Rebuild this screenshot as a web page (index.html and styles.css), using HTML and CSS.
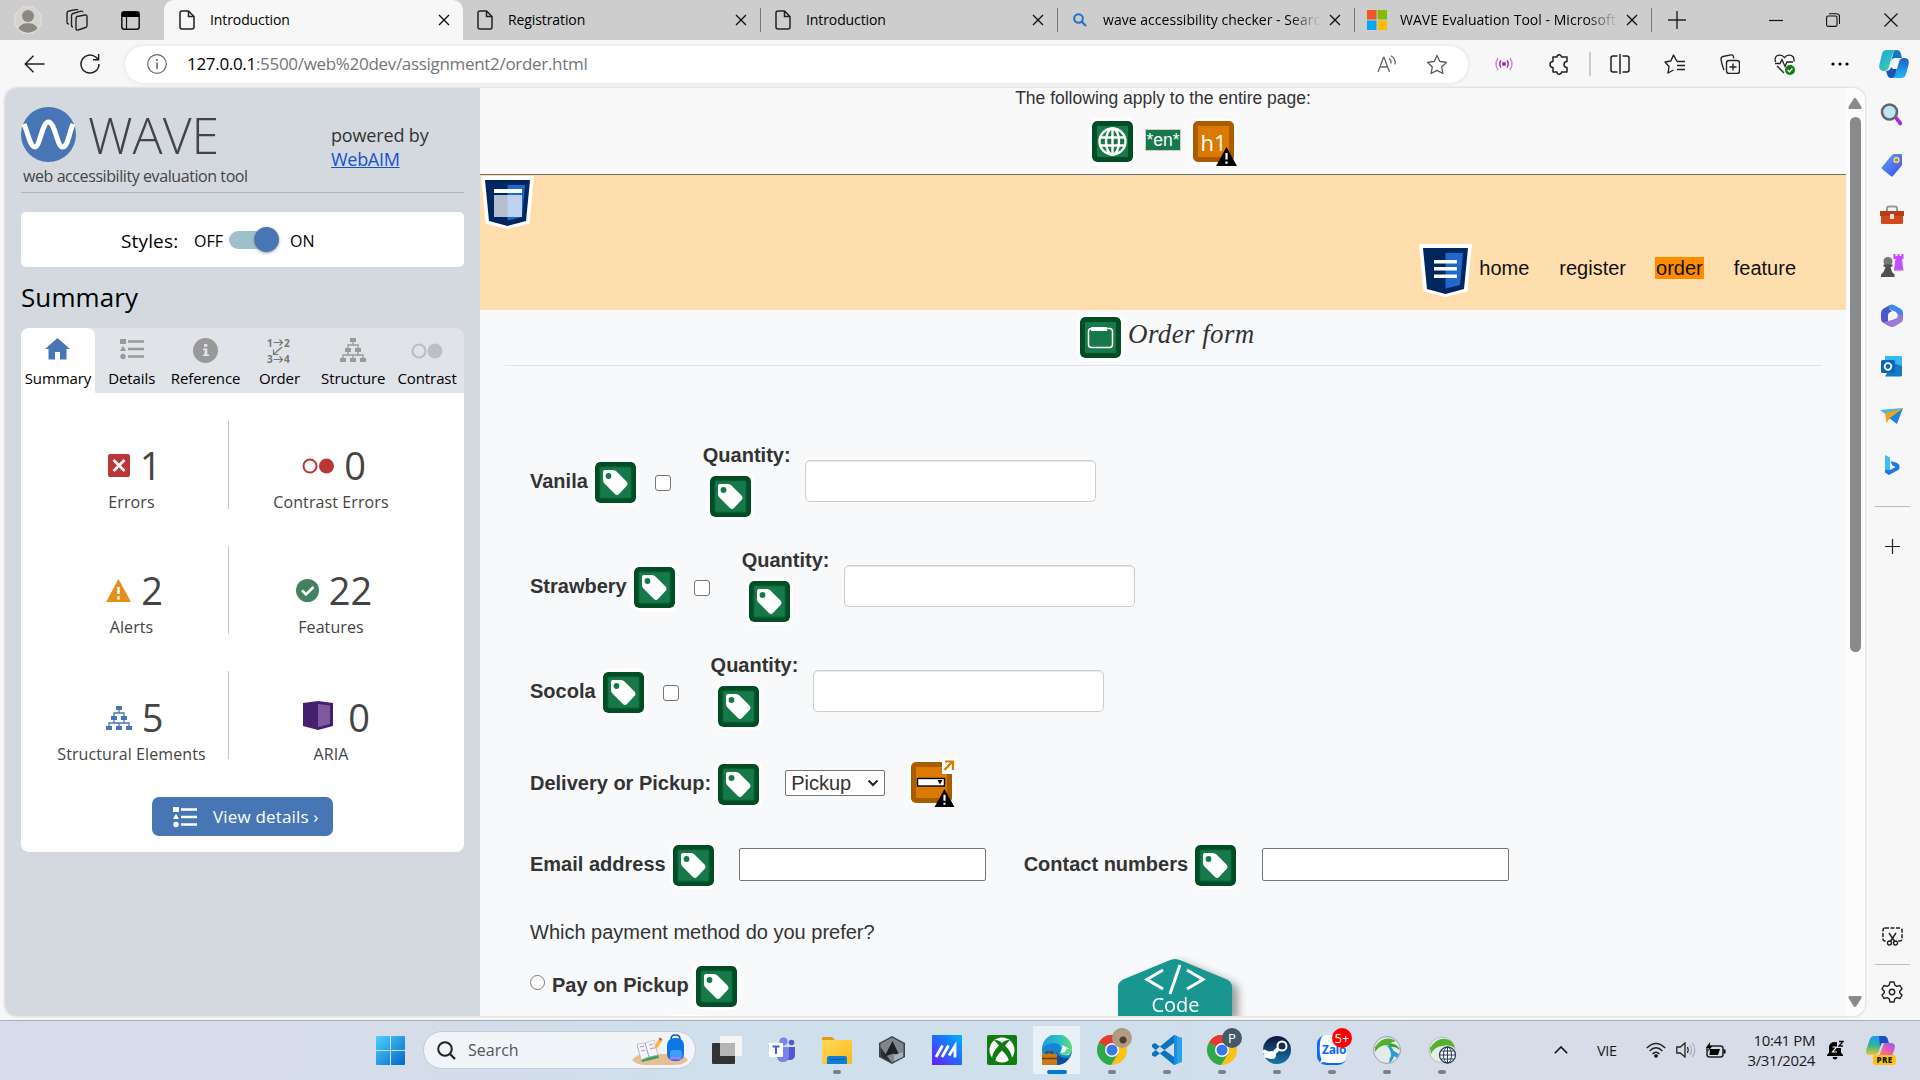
FILE: index.html
```html
<!DOCTYPE html>
<html lang="en">
<head>
<meta charset="utf-8">
<title>Introduction</title>
<link rel="stylesheet" href="styles.css">
</head>
<body>
<svg class="defs" aria-hidden="true">
  <defs>
    <linearGradient id="gWin" x1="0" y1="0" x2="1" y2="1"><stop offset="0" stop-color="#4fd0ff"/><stop offset="1" stop-color="#0067c8"/></linearGradient>
    <linearGradient id="gCop" x1="0" y1="0" x2="1" y2="1"><stop offset="0" stop-color="#12a5e8"/><stop offset="1" stop-color="#52d68f"/></linearGradient>
    <linearGradient id="gCop2" x1="0" y1="0" x2="0" y2="1"><stop offset="0" stop-color="#1e5fc9"/><stop offset="1" stop-color="#22b8f5"/></linearGradient>
    <linearGradient id="gBlue" x1="0" y1="0" x2="1" y2="1"><stop offset="0" stop-color="#63a4ff"/><stop offset="1" stop-color="#3a4fe0"/></linearGradient>
    <linearGradient id="gEdge" x1="0" y1="0" x2="1" y2="0"><stop offset="0" stop-color="#1b9de2"/><stop offset=".6" stop-color="#2fc3c0"/><stop offset="1" stop-color="#5fe070"/></linearGradient>
    <linearGradient id="gA" x1="0" y1="1" x2="1" y2="0"><stop offset="0" stop-color="#6a1bff"/><stop offset=".55" stop-color="#1f6dff"/><stop offset="1" stop-color="#00b4ff"/></linearGradient>
    <linearGradient id="gSteam" x1="0" y1="0" x2="0" y2="1"><stop offset="0" stop-color="#10143a"/><stop offset="1" stop-color="#1277b0"/></linearGradient>
    <linearGradient id="gPre" x1="0" y1="0" x2="0" y2="1"><stop offset="0" stop-color="#1c9cf0"/><stop offset=".5" stop-color="#2fb59a"/><stop offset="1" stop-color="#f3c623"/></linearGradient>
    <linearGradient id="gPre2" x1="1" y1="0" x2="0" y2="1"><stop offset="0" stop-color="#8f5cf5"/><stop offset=".5" stop-color="#e85cb0"/><stop offset="1" stop-color="#ff8a5c"/></linearGradient>
    <linearGradient id="gFold" x1="0" y1="0" x2="1" y2="1"><stop offset="0" stop-color="#ffd95c"/><stop offset="1" stop-color="#fbb81c"/></linearGradient>
    <symbol id="doc" viewBox="0 0 16 20"><path d="M3 1h6.500L15 6.500V17a2 2 0 0 1-2 2H3a2 2 0 0 1-2-2V3a2 2 0 0 1 2-2zM9.500 1v5.500H15" fill="none" stroke="#222" stroke-width="1.500"/></symbol>
    <symbol id="x" viewBox="0 0 12 12"><path d="M1 1l10 10M11 1L1 11" stroke="#111" stroke-width="1.400"/></symbol>
    <symbol id="tag" viewBox="0 0 41 41"><rect width="41" height="41" rx="5" fill="#004d26"/><rect x="5" y="5" width="31" height="31" rx="1" fill="#17794a" stroke="#0d6a3b"/><path d="M8 10q0-2 2-2h8q2 0 3.500 1.500l10 10q2 2.500 0 4.500l-7.500 8q-2 2-4 0L9.500 21.500Q8 20 8 18z" fill="#fff"/><ellipse cx="13.500" cy="14" rx="2.900" ry="3" fill="#17794a"/></symbol>
    <symbol id="warn" viewBox="0 0 21 19"><path d="M10.500 0L21 19H0z" fill="#000"/><path d="M10.500 6v6.500M10.500 14.500v2.200" stroke="#fff" stroke-width="2.200"/></symbol>
    <symbol id="list" viewBox="0 0 24 22"><path d="M0 1h6v5H0zM3 7.800l3 5.200H0z"/><circle cx="3" cy="18.500" r="2.700"/><path d="M8 2.200h16v2.600H8zM8 9.700h16v2.600H8zM8 17.200h16v2.600H8z"/></symbol>
    <symbol id="tree" viewBox="0 0 26 24"><path d="M10 0h6v4h-6zM5 10h6v4H5zM15 10h6v4h-6zM0 20h6v4H0zM10 20h6v4h-6zM20 20h6v4h-6z"/><path d="M13 3v4M8 10V7h10v3M8 13v4M18 13v4M3 20v-3h20v3M13 20v-3" fill="none" stroke="currentColor" stroke-width="1.300"/></symbol>
    <symbol id="chrome" viewBox="0 0 30 30"><circle cx="15" cy="15" r="15" fill="#fbc116"/><path d="M15 15L2 7.500A15 15 0 0 1 28 7.500z" fill="#e33b2e"/><path d="M2 7.500A15 15 0 0 0 14 30l7.500-12L15 15z" fill="#2da94f"/><path d="M2 7.500A15 15 0 0 1 28 7.500H15z" fill="#e33b2e"/><circle cx="15" cy="15" r="7" fill="#fff"/><circle cx="15" cy="15" r="5.500" fill="#3b78e7"/></symbol>
    <symbol id="shield" viewBox="0 0 53 53"><path d="M0 0h53l-4.500 47.500L26.500 53 4.500 47.500z" fill="#fff"/><path d="M4 4h45l-4 41-18.500 5L8 45z" fill="#00265e"/><path d="M26.500 9H44l-3 32-14.500 3.500z" fill="#1f68cc"/></symbol>
  </defs>
</svg>

<header class="titlebar">
  <div class="tb-left">
    <svg class="avatar" viewBox="0 0 28 28"><circle cx="14" cy="14" r="13.500" fill="#d6d4cf" stroke="#e4e2dd"/><circle cx="14" cy="10" r="6" fill="#8c8880"/><path d="M4.500 22.500a10 7.500 0 0 1 19 0A13 13 0 0 1 4.500 22.500z" fill="#8c8880"/></svg>
    <svg class="workspaces" viewBox="0 0 22 22"><g fill="none" stroke="#222" stroke-width="1.400"><path d="M11 7.500l8-1.500q2-.3 2 1.500v9q0 1.500-1.300 2L12 21q-2 .5-2-1.500V9.500q0-1.600 1-2z"/><path d="M7 18q-1.500 0-1.500-2V6.500Q5.500 5 7 4.500l8-2.300q1.500-.4 2 1M3 15q-2 0-2-2V4Q1 2.500 3 2l7-1.400q1.500-.2 2 .6"/></g></svg>
    <svg class="tabact" viewBox="0 0 19 19"><rect x=".8" y=".8" width="17.400" height="17.400" rx="2.500" fill="none" stroke="#111" stroke-width="1.500"/><path d="M1 3q0-2 2-2h13q2 0 2 2v3H1z"/><path d="M5.500 6v12" stroke="#111" stroke-width="1.200"/></svg>
  </div>
  <div class="tab active"><span class="fav"><svg width="16" height="20"><use href="#doc"/></svg></span><span class="ttl">Introduction</span><svg class="close"><use href="#x"/></svg></div>
  <div class="tab"><span class="fav"><svg width="16" height="20"><use href="#doc"/></svg></span><span class="ttl">Registration</span><svg class="close"><use href="#x"/></svg></div>
  <div class="tab"><span class="fav"><svg width="16" height="20"><use href="#doc"/></svg></span><span class="ttl">Introduction</span><svg class="close"><use href="#x"/></svg></div>
  <div class="tab"><span class="fav"><svg width="14" height="14" viewBox="0 0 14 14"><g fill="none" stroke="#1a73c8" stroke-width="2"><circle cx="5.500" cy="5.500" r="4.300"/><path d="M8.500 8.500l4.500 4.500"/></g></svg></span><span class="ttl fade">wave accessibility checker - Search</span><svg class="close"><use href="#x"/></svg></div>
  <div class="tab"><span class="fav"><svg width="20" height="20" viewBox="0 0 20 20"><path d="M0 0h9.500v9.500H0z" fill="#f35325"/><path d="M10.500 0H20v9.500h-9.500z" fill="#81bc06"/><path d="M0 10.500h9.500V20H0z" fill="#05a6f0"/><path d="M10.500 10.500H20V20h-9.500z" fill="#ffba08"/></svg></span><span class="ttl fade">WAVE Evaluation Tool - Microsoft</span><svg class="close"><use href="#x"/></svg></div>
  <div class="newtab"><svg width="18" height="18" viewBox="0 0 18 18"><path d="M9 0v18M0 9h18" stroke="#222" stroke-width="1.400"/></svg></div>
  <div class="winctl">
    <svg width="14" height="14" viewBox="0 0 14 14"><path d="M0 7.500h14" stroke="#111" stroke-width="1.200"/></svg>
    <svg width="14" height="14" viewBox="0 0 14 14"><g fill="none" stroke="#111" stroke-width="1.100"><rect x=".6" y="3" width="10.400" height="10.400" rx="1.500"/><path d="M3 .8h7.500q3 0 3 3V11"/></g></svg>
    <svg width="14" height="14" viewBox="0 0 14 14"><path d="M.5.5l13 13M13.500.5L.5 13.500" stroke="#111" stroke-width="1.200"/></svg>
  </div>
</header>

<div class="toolbar">
  <div class="cell"><svg width="21" height="18" viewBox="0 0 21 18"><path d="M20.500 9H1.500M9.500 .8L1.300 9l8.200 8.200" fill="none" stroke="#222" stroke-width="1.500"/></svg></div>
  <div class="cell"><svg width="20" height="20" viewBox="0 0 20 20"><path d="M19 10a9 9 0 1 1-3-6.700L18.500 5.500M18.600 0v5.700H13" fill="none" stroke="#222" stroke-width="1.500"/></svg></div>
  <div class="omnibox">
    <svg width="20" height="20" viewBox="0 0 20 20"><circle cx="10" cy="10" r="9.300" fill="none" stroke="#666" stroke-width="1.200"/><path d="M10 8.500v6.500M10 5v2" stroke="#555" stroke-width="1.400"/></svg>
    <span class="url"><b>127.0.0.1</b>:5500/web%20dev/assignment2/order.html</span>
    <svg class="read" width="20" height="18" viewBox="0 0 20 18"><path d="M1 17L6.500 2.500h.6L12.500 17M3 12h7.500M12 3.500q2.500 2 2 5M14 .8q5 3 4 8.500" fill="none" stroke="#666" stroke-width="1.300"/></svg>
    <svg class="star" width="22" height="21" viewBox="0 0 22 21"><path d="M11 1.500l2.900 6 6.600.9-4.800 4.600 1.200 6.500L11 16.400l-5.900 3.100L6.300 13 1.500 8.400l6.600-.9z" fill="none" stroke="#555" stroke-width="1.300" stroke-linejoin="round"/></svg>
  </div>
  <div class="cell"><svg width="18" height="14" viewBox="0 0 18 14"><circle cx="9" cy="7" r="2" fill="#9b25b8"/><path d="M6 3.500q-2.500 3.500 0 7M12 3.500q2.500 3.500 0 7" fill="none" stroke="#9b25b8" stroke-width="1.400"/><path d="M3 1Q-1 7 3 13M15 1q4 6 0 12" fill="none" stroke="#d28be0" stroke-width="1.500"/></svg></div>
  <div class="cell"><svg width="20" height="21" viewBox="0 0 20 21"><path d="M4 3h4a2.200 2.200 0 0 1 4.500 0H18v4.500a3 3 0 0 0 0 6V18h-5.500a2.200 2.200 0 0 1-4.500 0H4v-4.500a3 3 0 0 1 0-6z" fill="none" stroke="#222" stroke-width="1.500" stroke-linejoin="round"/></svg></div>
  <i class="sep"></i>
  <div class="cell"><svg width="20" height="20" viewBox="0 0 20 20"><path d="M7.500 2H3Q1 2 1 4v12q0 2 2 2h4.500M12.500 2H17q2 0 2 2v12q0 2-2 2h-4.500M10 0v20" fill="none" stroke="#222" stroke-width="1.500"/></svg></div>
  <div class="cell"><svg width="21" height="20" viewBox="0 0 21 20"><path d="M13 7.500L9.500 1 6.800 7 1 8l4 4.500L4 19l5.500-3M13 7.500h8M13 11.500h8M13 15.500h8" fill="none" stroke="#222" stroke-width="1.400" stroke-linejoin="round"/></svg></div>
  <div class="cell"><svg width="20" height="20" viewBox="0 0 20 20"><g fill="none" stroke="#222" stroke-width="1.400"><rect x="6.500" y="6.500" width="13" height="13" rx="2.500"/><path d="M13 9.500v7M9.500 13h7M4 16Q1.500 10 1 5q-.2-2 2-2.500L11 .9q2-.3 2.400 1.500l.4 2"/></g></svg></div>
  <div class="cell"><svg width="21" height="21" viewBox="0 0 21 21"><path d="M1.500 8Q0 2 5 1.200q3.500-.4 5.500 2.500Q12.500.8 16 1.200q4.500.7 4 6.300M3 12l7 7M1 9.500h5l2-4 3 7 2-4.500h6" fill="none" stroke="#222" stroke-width="1.300"/><circle cx="16" cy="16" r="5" fill="#0f7b10"/><path d="M13.600 16l1.800 1.800 3-3.300" fill="none" stroke="#fff" stroke-width="1.300"/></svg></div>
  <div class="cell"><svg width="18" height="4" viewBox="0 0 18 4"><circle cx="2" cy="2" r="1.600"/><circle cx="9" cy="2" r="1.600"/><circle cx="16" cy="2" r="1.600"/></svg></div>
  <div class="cell"><svg width="30" height="28" viewBox="0 0 30 28"><path d="M8 0h10q-4 1-5 6l-3 11q-1 4-5 4Q-1 21 .5 14L3 4q1-4 5-4z" fill="url(#gCop)"/><path d="M18 0q3 0 4 4l1 4h-7q-3 0-4 4l-1 4 3-12q1-4 4-4z" fill="#1478c8"/><path d="M22 28H12q4-1 5-6l3-10q1-4 5-4 6 0 4.500 7L27 24q-1 4-5 4z" fill="url(#gCop2)"/><path d="M12 28q-3 0-4-4l-1-3q4 0 5-4l2 2h4l-1 3q-1 6-5 6z" fill="#1653b8"/></svg></div>
</div>

<div class="body">
  <div class="frame">
    <aside class="wave">
      <div class="wave-head">
        <div>
          <div class="logo"><svg width="55" height="55" viewBox="0 0 55 55"><circle cx="27.500" cy="27.500" r="27.500" fill="#4876b5"/><path d="M3 17C7 26 9 40 14 40S21 15 27.500 15 36 40 41.500 40 48 26 52 17" fill="none" stroke="#fff" stroke-width="5"/></svg><span>WAVE</span></div>
          <p class="tagline">web accessibility evaluation tool</p>
        </div>
        <div class="powered">powered by<br><a>WebAIM</a></div>
      </div>
      <div class="styles-box"><span class="st-l">Styles:</span><span class="st-off">OFF</span><span class="toggle"><i></i></span><span>ON</span></div>
      <h2>Summary</h2>
      <nav class="wtabs">
        <div class="on"><svg width="25" height="22" viewBox="0 0 25 22"><path d="M12.500 0L25 11h-3.500v10.500H15V14h-5v7.500H3.500V11H0z" fill="#4876b5"/></svg><span>Summary</span></div>
        <div><svg width="24" height="22"><use href="#list"/></svg><span>Details</span></div>
        <div><svg width="25" height="25" viewBox="0 0 25 25"><circle cx="12.500" cy="12.500" r="12.500"/><path d="M11 6h3.300v2.800H11zM10 10.500h4.300v6H16V18h-6v-1.500h1.500v-4.400H10z" fill="#e0e3e8"/></svg><span>Reference</span></div>
        <div><svg class="ord" width="26" height="26" viewBox="0 0 26 26"><text x="1" y="8.500">1</text><text x="18" y="8.500">2</text><text x="1" y="25">3</text><text x="18" y="25">4</text><path d="M7.500 4.500h9M13.500 1.500l3 3-3 3M7.500 21.500h9M13.500 18.500l3 3-3 3M16 9l-8 7M7.500 11.500V16.500h5" fill="none" stroke="#777" stroke-width="1.200"/></svg><span>Order</span></div>
        <div><svg width="26" height="24"><use href="#tree"/></svg><span>Structure</span></div>
        <div><svg width="32" height="16" viewBox="0 0 32 16"><circle cx="8" cy="8" r="6.500" fill="none" stroke="#bcc0c5" stroke-width="2.200"/><circle cx="24" cy="8" r="7.500" fill="#bcc0c5"/></svg><span>Contrast</span></div>
      </nav>
      <section class="panel">
        <div class="stats">
          <div class="stat"><p><svg width="22" height="23" viewBox="0 0 22 23"><rect width="22" height="23" rx="2" fill="#bb3636"/><path d="M5.500 6l11 11M16.500 6l-11 11" stroke="#fff" stroke-width="2.600"/></svg>1</p>Errors</div>
          <div class="stat"><p><svg width="32" height="16" viewBox="0 0 32 16"><circle cx="8" cy="8" r="6.500" fill="none" stroke="#bb3636" stroke-width="2"/><circle cx="24.500" cy="8" r="7.500" fill="#bb3636"/></svg>0</p>Contrast Errors</div>
          <div class="stat"><p><svg width="25" height="23" viewBox="0 0 25 23"><path d="M12.500 0L25 23H0z" fill="#e38f1a"/><path d="M12.500 8v7M12.500 17.500v3" stroke="#fff" stroke-width="2.600"/></svg>2</p>Alerts</div>
          <div class="stat"><p><svg width="23" height="23" viewBox="0 0 23 23"><circle cx="11.500" cy="11.500" r="11.500" fill="#438261"/><path d="M6 11.500l4 4 7.500-7.500" fill="none" stroke="#fff" stroke-width="2.500"/></svg>22</p>Features</div>
          <div class="stat last"><p><svg class="bt" width="26" height="24"><use href="#tree"/></svg>5</p>Structural Elements</div>
          <div class="stat last aria"><p><svg width="30" height="29" viewBox="0 0 30 29"><path d="M15 0l15 2v23l-15 4-15-4V2z" fill="#46216b"/><path d="M15 3l12 1.500v18.500L15 26z" fill="#7d5a9e"/></svg>0</p>ARIA</div>
        </div>
        <a class="btn"><svg width="24" height="22"><use href="#list"/></svg>View details ›</a>
      </section>
    </aside>

    <main class="page">
      <div class="pagewide">
        <p>The following apply to the entire page:</p>
        <div class="icons">
          <svg class="wi" viewBox="0 0 41 41"><rect width="41" height="41" rx="5" fill="#004d26"/><rect x="5" y="5" width="31" height="31" rx="1" fill="#17794a"/><g fill="none" stroke="#fff" stroke-width="2.400"><circle cx="20.500" cy="20.500" r="13"/><ellipse cx="20.500" cy="20.500" rx="6.500" ry="13"/><path d="M20.500 7v27M8.500 16.500h24M8.500 24.500h24"/></g></svg>
          <span class="lang">*en*</span>
          <span class="h1ic wi">h1<svg><use href="#warn"/></svg></span>
        </div>
      </div>
      <div class="band">
        <svg class="sh1"><use href="#shield"/><path d="M13 13h28v4H13z" fill="#fff"/><path d="M13 19h28v22H13z" fill="#fff" opacity=".7"/></svg>
        <nav>
          <svg class="sh2"><use href="#shield"/><path d="M15 16h23v3.500H15zM15 23h23v3.500H15zM15 30.500h23V34H15z" fill="#fff"/></svg>
          <a>home</a><a>register</a><a class="cur">order</a><a>feature</a>
        </nav>
      </div>
      <div class="heading"><svg class="wi" viewBox="0 0 41 41"><rect width="41" height="41" rx="5" fill="#004d26"/><rect x="5" y="5" width="31" height="31" rx="1" fill="#17794a"/><rect x="8.500" y="11.500" width="24" height="19" rx="3" fill="none" stroke="#fff" stroke-width="1.500"/><path d="M11 10h16v4H11z" fill="#fff"/></svg><h1>Order form</h1></div>
      <form>
        <div class="row"><b>Vanila</b><svg class="wi"><use href="#tag"/></svg><input type="checkbox"><div class="qty"><b>Quantity:</b><svg class="wi"><use href="#tag"/></svg></div><input class="fc" type="text"></div>
        <div class="row"><b>Strawbery</b><svg class="wi"><use href="#tag"/></svg><input type="checkbox"><div class="qty"><b>Quantity:</b><svg class="wi"><use href="#tag"/></svg></div><input class="fc" type="text"></div>
        <div class="row"><b>Socola</b><svg class="wi"><use href="#tag"/></svg><input type="checkbox"><div class="qty"><b>Quantity:</b><svg class="wi"><use href="#tag"/></svg></div><input class="fc" type="text"></div>
        <div class="row r-del"><b>Delivery or Pickup:</b><svg class="wi"><use href="#tag"/></svg><span class="select">Pickup<svg width="12" height="8" viewBox="0 0 12 8"><path d="M1.500 1.500L6 6l4.500-4.500" fill="none" stroke="#222" stroke-width="2"/></svg></span>
          <svg class="jump" viewBox="0 0 47 50"><rect x="1" y="2" width="46" height="46" rx="6" fill="#fff"/><rect x="3" y="4" width="41" height="41" rx="5" fill="#a95c00"/><rect x="8" y="9" width="31" height="31" fill="#da7a00"/><path d="M34 0h13v16H34z" fill="#fff"/><path d="M36.500 12l7.500-8M37 3.500h8V12" fill="none" stroke="#da7a00" stroke-width="2.200"/><rect x="9.500" y="20.500" width="27" height="7.500" fill="#fff" stroke="#000" stroke-width="1.400"/><path d="M29.500 22h5l-2.500 4.500z"/><svg x="26" y="31" width="21" height="18"><use href="#warn"/></svg></svg></div>
        <div class="row r-mail"><b>Email address</b><svg class="wi"><use href="#tag"/></svg><input class="raw" type="text"><b class="second">Contact numbers</b><svg class="wi"><use href="#tag"/></svg><input class="raw" type="text"></div>
        <p class="q">Which payment method do you prefer?</p>
        <div class="row r-pay"><input type="radio"><b>Pay on Pickup</b><svg class="wi"><use href="#tag"/></svg></div>
        <div class="row r-next"><svg class="wi"><use href="#tag"/></svg></div>
      </form>
      <div class="code"><svg width="114" height="57" viewBox="0 0 114 57"><path d="M0 57V28q0-5 5-7.500L51 1.500q6-3 12 0l46 19q5 2.500 5 7.500v29z" fill="#18968f"/><path d="M45 11L29 20.500 45 30M69 11l16 9.500L69 30M62 6L52 35" fill="none" stroke="#fff" stroke-width="3"/></svg><span>Code</span></div>
    </main>
    <div class="scroll"><svg width="14" height="11" viewBox="0 0 14 11"><path d="M7 0q1 0 1.500 1L13.500 9q.5 2-1 2H1.500Q0 11 .5 9L5.500 1Q6 0 7 0z"/></svg><i></i><svg width="14" height="11" viewBox="0 0 14 11"><path d="M7 11q1 0 1.500-1L13.500 2q.5-2-1-2H1.500Q0 0 .5 2l5 8Q6 11 7 11z"/></svg></div>
  </div>

  <aside class="edgebar">
    <svg width="24" height="24" viewBox="0 0 24 24"><path d="M14 15l3-2 5 6.500q.5 3-2.500 3z" fill="#b026e8"/><circle cx="9.500" cy="9" r="7.500" fill="#bfe3f7" stroke="#666" stroke-width="2.600"/></svg>
    <svg width="22" height="24" viewBox="0 0 22 24"><path d="M1 14L11 2q1-1 2.500-1H20q1 0 1 1v9q0 1-.6 2L12 23q-1.200 1-2.300 0L1 16q-.8-1 0-2z" fill="url(#gBlue)"/><circle cx="15.500" cy="7" r="2.400" fill="#6d8cff" stroke="#ffd43b" stroke-width="1.600"/></svg>
    <svg width="24" height="20" viewBox="0 0 24 20"><path d="M7 6V3.500Q7 1.500 9 1.500h6q2 0 2 2V6" fill="none" stroke="#999" stroke-width="2"/><rect x="1" y="6" width="22" height="13" rx="1.500" fill="#d14a1c"/><path d="M0 6h24v5H0z" fill="#b93c12"/><rect x="10" y="9" width="4" height="5" fill="#ddd"/></svg>
    <svg width="24" height="24" viewBox="0 0 24 24"><path d="M13.500 1h2v2h2V1h2v2h2V1h2v5h-1.500l1 9q.5 2 1 2.500H14l1.500-11.500H13.500z" fill="#c44dff"/><circle cx="8" cy="8.500" r="4.500" fill="#777"/><path d="M3.500 11.500h9v2l-2 .5 1.500 5 2.500 2.500V24H1v-2.500L3.500 19 5.500 14l-2-.5z" fill="#505050"/></svg>
    <svg width="22" height="23" viewBox="0 0 22 23"><path d="M8 1.500Q11 0 13 1l7 4q2 1.500 2 4v5l-5-3-2-3L8 5z" fill="#3b8ae6"/><path d="M8 1.500L2 5Q0 6.500 0 9v6q0 2 2 3.500l5 3V11l4-4-3-2z" fill="#4a58c8"/><path d="M22 12v3q0 2-2 3.500l-6 3.800q-3 1.400-6 0L2.500 18 11 16l5-2 1-4z" fill="#9c7ad8"/><circle cx="11" cy="11.500" r="3.800" fill="#f7f7f7"/></svg>
    <svg width="22" height="22" viewBox="0 0 22 22"><path d="M4 1h16q1 0 1 1v10H4z" fill="#36b9f3"/><path d="M12 8l9 3v9q0 1.500-1.500 1.500H4z" fill="#1578c6"/><rect y="5" width="14" height="13" rx="1.500" fill="#0a67b8"/><circle cx="7" cy="11.500" r="3.300" fill="none" stroke="#fff" stroke-width="1.800"/></svg>
    <svg width="24" height="18" viewBox="0 0 24 18"><path d="M0 3L23 1 8 9z" fill="#35b8f5"/><path d="M23 1L17 17 9 11z" fill="#1f84e0"/><path d="M23 1L5 6l1.500 10L10 11z" fill="#f0a020"/></svg>
    <svg width="16" height="21" viewBox="0 0 16 21"><path d="M1 0l5 2.500V15l-5 2.500z" fill="#3bc0f5"/><path d="M1 15v2.500L5 20l10-5.500q2-5-3-7L6.500 6l2 4.500 3 1.500L6 15z" fill="#1f76e8"/></svg>
    <hr>
    <svg class="plus" width="15" height="15" viewBox="0 0 15 15"><path d="M7.500 0v15M0 7.500h15" stroke="#222" stroke-width="1.200"/></svg>
    <svg class="snip" width="21" height="19" viewBox="0 0 21 19"><rect x="1" y="1" width="19" height="13" rx="2" fill="none" stroke="#222" stroke-width="1.500" stroke-dasharray="4 1.500"/><path d="M5 13h11v6H5z" fill="#f7f7f7"/><path d="M7 6l6 9M14 6l-6 9" stroke="#222" stroke-width="1.400"/><g fill="none" stroke="#222" stroke-width="1.300"><circle cx="7.500" cy="16" r="2"/><circle cx="13.500" cy="16" r="2"/></g></svg>
    <hr>
    <svg width="22" height="22" viewBox="0 0 22 22"><path d="M9 1h4l.8 3.200 2 1.200L19 4.500l2 3.400-2.300 2.300v1.600L21 14.100l-2 3.400-3.200-.9-2 1.200L13 21H9l-.8-3.200-2-1.200-3.200.9-2-3.400 2.300-2.300v-1.600L1 7.900l2-3.400 3.200.9 2-1.200z" fill="none" stroke="#222" stroke-width="1.400" stroke-linejoin="round"/><circle cx="11" cy="11" r="2.700" fill="none" stroke="#222" stroke-width="1.400"/></svg>
  </aside>
</div>

<footer class="taskbar">
  <svg class="start" width="29" height="29" viewBox="0 0 29 29"><path d="M1 0h13v14H0V1q0-1 1-1zM15 0h13q1 0 1 1v13H15zM0 15h14v14H1q-1 0-1-1zM15 15h14v13q0 1-1 1H15z" fill="url(#gWin)"/></svg>
  <div class="search"><svg width="19" height="19" viewBox="0 0 19 19"><circle cx="8" cy="8" r="6.800" fill="none" stroke="#222" stroke-width="2"/><path d="M13 13l5 5" stroke="#222" stroke-width="2.300"/></svg><span>Search</span>
    <svg class="art" width="56" height="32" viewBox="0 0 56 32"><path d="M0 26q4-6 14-6h28q10 0 14 6-4 5-14 5H14Q4 31 0 26z" fill="#e8bf94"/><path d="M5 12l17-4 5 16-17 4z" fill="#3da35a"/><path d="M5 10l8-1 9-3 4 15-9 2-8 3z" fill="#f5f3fa" stroke="#aaa" stroke-width=".6"/><path d="M13 9l4 14M8 13l4-.8M9 17l4-.8M17 11l4-1.200M18 15l4-1.200" stroke="#a59bc8" stroke-width="1"/><path d="M22 15l1-4 4-6 3 2-4 6z" fill="#ffb02e"/><path d="M26.500 5l1-1.500 2.800 1.500-.8 2z" fill="#e8455a"/><rect x="35" y="4" width="17" height="23" rx="7" fill="#0f76e8"/><path d="M39 5q0-4 4.500-4T48 5" fill="none" stroke="#0a58c0" stroke-width="1.500"/><rect x="38" y="16" width="12" height="9" rx="3" fill="#3f9cf8"/><path d="M38 23h11v2.500H38z" fill="#a77bff"/></svg></div>
  <div class="apps">
    <div><svg viewBox="0 0 30 30"><rect x="8" y="1" width="22" height="20" rx="1" fill="#f5f5f5"/><rect y="8" width="23" height="21" rx="1" fill="#333"/><rect x="8" y="8" width="15" height="13" fill="#b5b5b3"/></svg></div>
    <div><svg viewBox="0 0 30 30"><circle cx="16.500" cy="6.500" r="4" fill="#7b83eb"/><circle cx="24.500" cy="7.500" r="2.800" fill="#5059c9"/><path d="M19 12h9v8q0 4-4 5h-5z" fill="#5059c9"/><path d="M10 12h12v9q0 6-6 6t-6-6z" fill="#7b83eb"/><rect x="2" y="8" width="14" height="14" fill="#fff"/><path d="M5.500 11.500h7M9 11.500V19" stroke="#5059c9" stroke-width="2"/></svg></div>
    <div class="run"><svg viewBox="0 0 30 30"><path d="M0 3q0-1 1-1h9l3 3v5H0z" fill="#e09c10"/><rect y="5" width="30" height="24" rx="1" fill="url(#gFold)"/><path d="M5 29v-6q0-2 2-2h16q2 0 2 2v6z" fill="#0f7fd6"/><path d="M8 24.500h14" stroke="#0a5ba5" stroke-width="1.200"/></svg></div>
    <div><svg viewBox="0 0 30 30"><path d="M15 1l13 7v14l-13 7-13-7V8z" fill="#3c444a"/><path d="M15 2.500l11.500 6.300v12.400L15 27.500 3.500 21.200V8.800z" fill="#7d878d"/><path d="M3.500 12L15 28l-11.500-6.800z" fill="#2a2f33"/><path d="M15.500 6l7 14.500-6-2-9 3z" fill="#1c2024"/><path d="M17 20l9-3v5l-9 4z" fill="#aab2b8"/></svg></div>
    <div><svg viewBox="0 0 30 30"><rect width="30" height="30" fill="url(#gA)"/><path d="M4 22L10.500 10.500M10 22l6.500-11.500M17 20.500L23 11v11.500" fill="none" stroke="#fff" stroke-width="2.800"/></svg></div>
    <div><svg viewBox="0 0 30 30"><rect width="30" height="30" rx="2" fill="#107c10"/><circle cx="15" cy="15" r="12.500" fill="#fff"/><path d="M7 5q5-.5 8 3 3-3.500 8-3l-5 5.500Q24.500 17 25 23l-3 3q-1-5-7-10.500Q9 21 8 26l-3-3q.5-6 7-12.500z" fill="#107c10"/></svg></div>
    <div class="cur run"><svg viewBox="0 0 30 30"><circle cx="15" cy="15" r="15" fill="#1585d2"/><path d="M0 15A15 15 0 0 1 30 13q0 7-8 7-5 0-3-4Q20 8 12 8 3 8 0 15z" fill="url(#gEdge)"/><path d="M14 16q2 8 13 7-4 7-12 7z" fill="#0c4e9e"/><path d="M19 16q-3 5 8 4l3-5-6-3-4-2q1 3-1 6z" fill="#ecf2f8"/><path d="M30 13q0 7-8 7-4 0-3.500-2.500Q23 19 24.500 14q3 1 5.500-1z" fill="#58dc78"/><rect y="19" width="15" height="11" fill="#c97a14"/><path d="M4.500 19v-2h6v2M0 23.500h15" fill="none" stroke="#6e3d05" stroke-width="1.500"/></svg></div>
    <div class="run"><svg viewBox="0 0 30 30"><use href="#chrome"/></svg><em class="bdg photo"></em></div>
    <div class="run"><svg viewBox="0 0 30 30"><path d="M22 0l8 3v24l-8 3z" fill="#2aa2ec"/><path d="M22 0L0 18q-1 2 1 3l2 1L22 8zM22 30L0 12q-1-2 1-3l2-1 19 14z" fill="#0a74c0"/><path d="M22 0v30l3-1V1z" fill="#1c8fd8"/></svg></div>
    <div class="run"><svg viewBox="0 0 30 30"><use href="#chrome"/></svg><em class="bdg p">P</em></div>
    <div class="run"><svg viewBox="0 0 30 30"><circle cx="15" cy="15" r="14" fill="url(#gSteam)"/><path d="M1 16l9 4 6-6M2 20l7 2" fill="none" stroke="#fff" stroke-width="4"/><circle cx="10" cy="20" r="4" fill="#fff"/><circle cx="20" cy="11" r="4.500" fill="#16305c" stroke="#fff" stroke-width="2"/></svg></div>
    <div class="run zalo"><svg viewBox="0 0 30 30"><rect width="30" height="30" rx="9" fill="#0a68ff"/><path d="M8 0h14q8 0 8 8v12q0 8-8 8H12q-3 0-5-1l-4 1 1.500-4Q2 20 3 8q1-8 5-8z" fill="#fff"/></svg><span>Zalo</span><em class="bdg red">5+</em></div>
    <div class="run"><svg viewBox="0 0 30 30"><circle cx="15" cy="15" r="13.500" fill="#e6ebe8" stroke="#8fa5a8"/><path d="M3 12Q12-1 24 6q-5 1-7 4Q8 9 3 17z" fill="#55b030"/><path d="M16 9q8-2 12 6-5-4-10-3z" fill="#3d9a2c"/><path d="M14 10q9 1 8 11-1 5-5 7 0-4 2-7 0-7-5-11z" fill="#2c9bd0"/><path d="M20 15l7 4-2 4-6-4z" fill="#2c9bd0"/></svg></div>
    <div class="run"><svg viewBox="0 0 30 30"><circle cx="15" cy="15" r="13" fill="#e6ebe8" stroke="#b5c0c0"/><path d="M3 13Q12-1 24 6q3 3 4 7-6-4-12-2Q8 11 4 19z" fill="#55b030"/><circle cx="20.500" cy="20" r="8" fill="#fff" stroke="#2a3e5c" stroke-width="1.300"/><path d="M20.500 12v16M12.500 20h16M14 16h13M14 24h13" stroke="#2a3e5c"/><ellipse cx="20.500" cy="20" rx="4" ry="8" fill="none" stroke="#2a3e5c"/></svg></div>
  </div>
  <div class="tray">
    <svg width="14" height="8" viewBox="0 0 14 8"><path d="M.8 7.300L7 1l6.200 6.300" fill="none" stroke="#111" stroke-width="1.600"/></svg>
    <span class="vie">VIE</span>
    <svg class="wifi" width="20" height="16" viewBox="0 0 20 16"><g fill="none" stroke="#222" stroke-width="1.500"><path d="M.8 6Q10-3 19.200 6M3.600 9Q10 2.500 16.400 9M6.500 12Q10 8.500 13.500 12"/></g><circle cx="10" cy="14" r="1.800"/></svg>
    <svg class="spk" width="20" height="16" viewBox="0 0 20 16"><path d="M.8 5h3.500L9 1v14l-4.700-4H.8z" fill="none" stroke="#222" stroke-width="1.300"/><path d="M11.500 5q1.500 3 0 6" fill="none" stroke="#222" stroke-width="1.300"/><path d="M14 3q3 5 0 10M16.500 1q4.500 7 0 14" fill="none" stroke="#aab" stroke-width="1.200"/></svg>
    <svg class="bat" width="20" height="16" viewBox="0 0 20 16"><rect x="1" y="4" width="16" height="11" rx="2.500" fill="none" stroke="#222" stroke-width="1.500"/><path d="M4 7h10l-2 6H3.500zM17.500 7.500h2v4h-2z"/><path d="M4 0L0 6h3L1.500 10 6.500 4H3.800z"/></svg>
    <div class="clock">10:41 PM<br>3/31/2024</div>
    <svg class="bell" width="17" height="20" viewBox="0 0 17 20"><path d="M0 15l2-2.500V7.500Q2 2 8 2t6 5.500v5l2 2.500v1H0zM5.500 17h5q-.5 2.500-2.500 2.500T5.500 17z"/><path d="M10 0h7v8h-7z" fill="#d6dde9"/><path d="M12 1.500h4l-4 4.500h4" fill="none" stroke="#111" stroke-width="1.400"/><path d="M5.500 7H9.500l-4 5h4.500" fill="none" stroke="#fff" stroke-width="1.200"/></svg>
    <div class="pre"><svg width="29" height="26" viewBox="0 0 29 26"><path d="M8 1h12q-3 1-4 5l-3 10q-1 4-5 4H4q-5 0-3.500-6L3.500 5Q5 1 8 1z" fill="url(#gPre)"/><path d="M13 1h5q3 0 4 4l1 3h-6q-2 0-3 4z" fill="#1b4fc4"/><path d="M18 8h7q5 0 3.500 6L26 21H12q2-1 3-5z" fill="url(#gPre2)"/></svg><span>PRE</span></div>
  </div>
</footer>
</body>
</html>
```
FILE: styles.css
```css
* { box-sizing: border-box; }
body { margin: 0; width: 1920px; height: 1080px; overflow: hidden; background: #f7f7f7; font-family: "Open Sans", "Noto Sans", sans-serif; display: flex; flex-direction: column; color: #000; }
p, h1, h2 { margin: 0; font-weight: 400; }
svg { flex: none; display: block; }
.defs { position: absolute; width: 0; height: 0; }

/* title bar */
.titlebar { height: 40px; flex: none; display: flex; background: #cdcdcd; }
.tb-left { width: 164px; display: flex; align-items: center; padding-left: 14px; }
.avatar { width: 28px; height: 28px; }
.workspaces { width: 22px; height: 22px; margin-left: 24px; }
.tabact { width: 19px; height: 19px; margin-left: 33px; }
.tab { width: 297px; display: flex; align-items: center; padding: 0 14px 0 12px; background: linear-gradient(#777, #777) 100% 50% / 1px 24px no-repeat; }
.tab.active { width: 299px; padding: 0 13px 0 13px; background: #f7f7f7; border-radius: 10px 10px 0 0; }
.tab.active + .tab { width: 298px; }
.fav { width: 20px; display: flex; justify-content: center; }
.ttl { flex: 1; min-width: 0; margin: 0 8px 1px 13px; overflow: hidden; white-space: nowrap; font-size: 14px; line-height: 24px; letter-spacing: -0.1px; }
.fade { letter-spacing: 0.03px; mask-image: linear-gradient(90deg, #000 85%, transparent); }
.close { width: 12px; height: 12px; }
.newtab { width: 50px; display: flex; align-items: center; justify-content: center; }
.winctl { margin-left: auto; width: 173px; display: flex; align-items: center; justify-content: space-around; }

/* toolbar */
.toolbar { height: 48px; flex: none; display: flex; align-items: center; }
.cell { width: 55px; display: flex; justify-content: center; }
.cell:first-child { width: 62px; padding-left: 7px; }
.cell:last-child { width: 53px; }
.omnibox { width: 1343px; height: 37px; margin: 0 8px; border-radius: 19px; background: #fff; box-shadow: 0 0 4px #ddd; display: flex; align-items: center; padding: 0 20px 0 22px; }
.url { flex: 1; margin-left: 20px; font-size: 17px; line-height: 24px; color: #757575; letter-spacing: -0.31px; }
.url b { font-weight: 400; color: #000; }
.read { margin-right: 29px; }
.sep { width: 2px; height: 24px; margin: 0 1px 0 3px; background: #ccc; }

/* browser content */
.body { height: 932px; flex: none; display: flex; }
.frame { width: 1860px; height: 928px; margin-left: 5px; border-radius: 12px; overflow: hidden; display: flex; background: #fcfcfc; box-shadow: 0 0 2px 1px #ddd; }

/* evaluation sidebar */
.wave { width: 475px; padding: 0 16px; background: #d4d9e0; }
.wave-head { height: 105px; display: flex; justify-content: space-between; border-bottom: 1px solid #b2b6ba; padding-top: 19px; }
.logo { display: flex; height: 55px; }
.logo span { margin-left: 12px; font-size: 50px; line-height: 57px; font-weight: 300; color: #444; }
.tagline { margin: 2px 0 0 2px; font-size: 16px; line-height: 24px; color: #444; letter-spacing: -0.42px; white-space: nowrap; }
.powered { width: 133px; padding-top: 16px; font-size: 18px; line-height: 24px; color: #333; letter-spacing: -0.15px; }
.powered a { color: #1651cf; text-decoration: underline; letter-spacing: -0.3px; }
.styles-box { height: 55px; margin-top: 19px; background: #fff; border-radius: 5px; display: flex; align-items: center; padding: 2px 0 0 100px; font-size: 16px; }
.st-l { font-size: 19px; width: 73px; letter-spacing: 0.15px; }
.st-off { width: 35px; }
.toggle { width: 50px; margin: 0 11px 1px 0; height: 18px; position: relative; background: linear-gradient(#9fc1cb, #9fc1cb) 0 0 / 40px 18px no-repeat; border-radius: 9px; }
.toggle i { position: absolute; right: 0; top: -4px; width: 25px; height: 25px; border-radius: 50%; background: #4876b5; box-shadow: 0 1px 3px #999; }
h2 { margin: 10px 0 11px; font-size: 26px; line-height: 40px; letter-spacing: 0.1px; }
.wtabs { height: 65px; display: grid; grid-template-columns: repeat(6, 1fr); background: #e0e3e8; border-radius: 8px 8px 0 0; fill: #999; color: #999; font-size: 15px; line-height: 20px; }
.wtabs div { display: flex; flex-direction: column; align-items: center; justify-content: space-between; padding: 10px 0 5px; letter-spacing: -0.1px; }
.wtabs span { color: #000; }
.wtabs .on { background: #fff; border-radius: 8px 8px 0 0; }
.wtabs div:last-child svg { margin-top: 5px; }
.ord { overflow: visible; }
.ord text { font-size: 10px; font-weight: 700; fill: #777; }
.panel { height: 459px; background: #fff; border-radius: 0 0 8px 8px; padding: 28px 0 0 11px; }
.stats { width: 400px; display: grid; grid-template-columns: 197px 203px; row-gap: 37px; }
.stat { height: 88px; padding: 24px 0 0 3px; text-align: center; font-size: 16px; line-height: 24px; color: #444; white-space: nowrap; letter-spacing: 0.1px; }
.stat:nth-child(odd) { border-right: 1px solid #c4c4c4; }
.stat:nth-child(even) { padding-left: 1px; }
.stat p { display: flex; justify-content: center; align-items: center; gap: 10px; height: 40px; margin-bottom: 5px; font-size: 38px; line-height: 40px; padding-left: 6px; letter-spacing: 0; }
.stat p svg { margin-top: 1px; }
.stat.last { padding-top: 26px; }
.aria p { gap: 15px; padding-left: 11px; }
.aria p svg { margin-top: -4px; }
.bt { fill: #4876b5; color: #4876b5; }
.btn { width: 181px; height: 39px; margin: 38px 0 0 120px; display: flex; align-items: center; gap: 16px; padding-left: 21px; border-radius: 7px; background: #4876b5; color: #fff; fill: #fff; font-size: 17px; letter-spacing: 0.17px; white-space: nowrap; }

/* evaluated page */
.page { width: 1366px; position: relative; overflow: hidden; background: #f8f9fb; font-family: "Liberation Sans", Arial, sans-serif; font-size: 20px; line-height: 22px; color: #333; }
.wi { width: 41px; height: 41px; border-radius: 5px; box-shadow: 0 0 0 3px #fff; flex: none; }
.pagewide { height: 87px; background: #f9f9f9; border-bottom: 1px solid #667268; text-align: center; font-size: 17.5px; line-height: 20px; }
.icons { display: flex; justify-content: center; gap: 12px; margin-top: 13px; }
.lang { width: 36px; height: 22px; margin-top: 8px; background: #17794a; border: 1px solid #ccc; color: #fff; font-size: 17.5px; line-height: 21px; display: flex; justify-content: center; }
.h1ic { position: relative; background: #da7a00; border: 5px solid #a95c00; color: #fff; font: 22px/32px "Open Sans", sans-serif; }
.h1ic svg { position: absolute; left: 18px; top: 21px; width: 21px; height: 19px; }
.band { height: 135px; background: #ffdead; display: flex; justify-content: space-between; padding: 1px 50px 0 1px; color: #111; }
.sh1, .sh2 { width: 53px; height: 53px; }
.band nav { display: flex; gap: 30px; padding-top: 68px; }
.sh2 { margin-right: -23px; }
.band a { height: 22px; margin-top: 13px; }
.cur { background: #ff8c00; padding: 0 1px; margin-left: -1px; }
.heading { height: 56px; margin: 0 24px 0 25px; border-bottom: 1px solid #e2e4e7; display: flex; justify-content: center; gap: 7px; padding: 7px 0 0 8px; }
h1 { width: 127px; font: italic 27px/34px "Liberation Serif", cursive; letter-spacing: 0.4px; white-space: nowrap; color: #333; }
form { padding: 63px 0 0 50px; }
.row { height: 105px; display: flex; align-items: center; }
.row > b { margin-bottom: 2px; }
.row > .wi { margin: 1px 0 0 7px; }
input { margin: 0; appearance: none; background: #fff; border: 1px solid #767676; border-radius: 2px; padding: 0; }
input[type=checkbox] { width: 16px; height: 16px; margin: 2px 32px 0 19px; border-radius: 3px; }
.qty { width: 88px; display: flex; flex-direction: column; gap: 10px; margin-bottom: 2px; }
.qty .wi { margin-left: 7px; }
.fc { width: 291px; height: 42px; margin: 0 0 2px 14px; border-color: #ccc; border-radius: 5px; box-shadow: inset 0 1px 1px #e8e8e8; }
.r-del { height: 80px; }
.select { width: 100px; height: 26px; margin: 0 0 2px 26px; border: 1px solid #767676; border-radius: 2px; background: #fff; padding: 0 5px; display: flex; align-items: center; justify-content: space-between; color: #333; }
.jump { width: 47px; height: 50px; margin: 0 0 2px 23px; }
.r-mail { height: 82px; }
.raw { width: 247px; height: 33px; margin: 0 0 2px 25px; }
.r-mail .raw:last-child { margin-left: 26px; }
.second { margin-left: 38px; }
.q { height: 52px; padding-top: 15px; }
.r-pay { height: 56px; }
input[type=radio] { width: 15px; height: 15px; border-radius: 50%; margin: -7px 7px 0 0; }
.r-next { height: 47px; padding-left: 130px; }
.code { position: absolute; left: 638px; bottom: 0; width: 114px; height: 57px; filter: drop-shadow(6px 4px 4px #999); }
.code span { position: absolute; left: 1px; right: 0; bottom: -1px; text-align: center; font: 20px/24px "Open Sans", sans-serif; color: #fff; }
.scroll { width: 19px; display: flex; flex-direction: column; align-items: center; padding: 10px 1px 9px 0; fill: #8a8a8a; }
.scroll i { width: 11px; height: 535px; margin: 8px 0 auto; border-radius: 6px; background: #8a8a8a; }

/* browser side bar */
.edgebar { width: 55px; height: 928px; padding: 2px 1px 10px 0; display: grid; grid-template-rows: repeat(8, 50.1px) 31px 49px 1fr 28px 28px; justify-items: center; align-items: center; }
.edgebar hr { width: 35px; height: 1px; margin: 0; border: 0; background: #bbb; }
.edgebar .snip { align-self: end; margin-bottom: 4px; }

/* taskbar */
.taskbar { height: 60px; flex: none; border-top: 1px solid #a9b1bd; background: linear-gradient(90deg, #d7dcea, #d5dcea 22%, #d0dfec 35%, #d0dfec 60%, #d6dde9 75%); display: flex; align-items: center; padding-bottom: 1px; }
.start { margin-left: 376px; }
.search { width: 273px; height: 38px; margin-left: 18px; border-radius: 19px; background: #f1f5f9; border: 1px solid #c3ccd8; display: flex; align-items: center; padding: 0 7px 0 13px; }
.search span { margin-left: 12px; font-size: 16px; color: #555; }
.art { margin-left: auto; }
.apps { height: 58px; display: flex; margin-left: 3px; }
.apps > div { width: 55px; position: relative; display: flex; justify-content: center; align-items: center; }
.apps svg { width: 30px; height: 30px; }
.apps .cur { margin: 0; padding: 0; background: linear-gradient(#eaf0f7, #eaf0f7) 50% 50% / 47px 48px no-repeat; }
.run::after { content: ""; position: absolute; bottom: 5px; width: 8px; height: 4px; border-radius: 2px; background: #7c8187; }
.apps .cur::after { width: 20px; background: #0078d4; }
.bdg { position: absolute; left: 28px; top: 7px; width: 20px; height: 20px; border-radius: 50%; font-style: normal; font-size: 13px; line-height: 20px; text-align: center; color: #fff; }
.photo { background: radial-gradient(circle at 55% 60%, #4b4038 0 20%, #b39a80 24% 60%, #8f7a66); }
.p { background: #455a64; }
.red { background: #f00; }
.zalo span { position: absolute; left: 18px; top: 19px; font-size: 12px; line-height: 20px; font-weight: 700; color: #0a68ff; letter-spacing: -0.3px; }
.tray { display: flex; align-items: center; margin-left: auto; padding-right: 24px; font-size: 15px; color: #1a1a1a; }
.vie { margin-left: 29px; width: 21px; font-size: 14.5px; letter-spacing: -0.3px; }
.wifi { margin-left: 28px; }
.spk { margin-left: 10px; }
.bat { margin-left: 10px; }
.clock { width: 89px; text-align: right; line-height: 20px; letter-spacing: -0.4px; white-space: nowrap; }
.bell { margin-left: 12px; }
.pre { margin-left: 22px; position: relative; height: 30px; width: 30px; }
.pre span { position: absolute; left: 7px; bottom: 0; width: 23px; height: 10px; border-radius: 3px; background: #ffc20e; font-size: 8px; line-height: 10px; font-weight: 800; text-align: center; letter-spacing: .4px; }
```
